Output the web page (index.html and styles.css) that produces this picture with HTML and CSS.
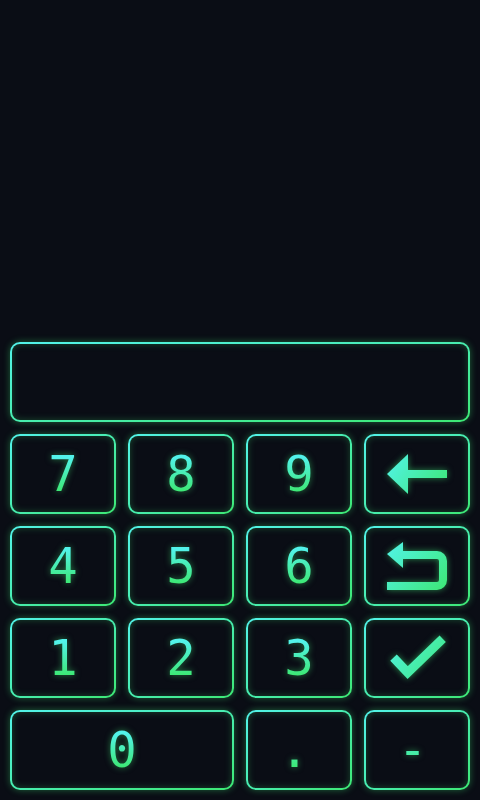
FILE: index.html
```html
<!DOCTYPE html>
<html>
<head>
<meta charset="utf-8">
<link rel="stylesheet" href="styles.css">
</head>
<body>
<div class="app">
  <div class="display"></div>
  <div class="pad">
    <div class="key"><span class="num">7</span></div>
    <div class="key"><span class="num">8</span></div>
    <div class="key"><span class="num">9</span></div>
    <div class="key">
      <svg class="icon" width="60" height="40" viewBox="0 0 60 40">
        <defs><linearGradient id="g1" x1="0" y1="0" x2="60" y2="40" gradientUnits="userSpaceOnUse"><stop offset="0" stop-color="#52f3ea"/><stop offset="1" stop-color="#3de874"/></linearGradient></defs>
        <polygon points="0,20 21,0 21,40" fill="url(#g1)"/>
        <rect x="20" y="16" width="40" height="8" fill="url(#g1)"/>
      </svg>
    </div>
    <div class="key"><span class="num">4</span></div>
    <div class="key"><span class="num">5</span></div>
    <div class="key"><span class="num">6</span></div>
    <div class="key">
      <svg class="icon" width="60" height="50" viewBox="0 0 60 50">
        <defs><linearGradient id="g2" x1="0" y1="0" x2="60" y2="50" gradientUnits="userSpaceOnUse"><stop offset="0" stop-color="#52f3ea"/><stop offset="1" stop-color="#3de874"/></linearGradient></defs>
        <polygon points="0,13 16,1 16,27" fill="url(#g2)"/>
        <path d="M15 14 H50 A6 6 0 0 1 56 20 V39 A6 6 0 0 1 50 45 H0" fill="none" stroke="url(#g2)" stroke-width="8"/>
      </svg>
    </div>
    <div class="key"><span class="num">1</span></div>
    <div class="key"><span class="num">2</span></div>
    <div class="key"><span class="num">3</span></div>
    <div class="key">
      <svg class="icon" width="60" height="48" viewBox="0 0 60 48">
        <defs><linearGradient id="g3" x1="0" y1="0" x2="60" y2="48" gradientUnits="userSpaceOnUse"><stop offset="0" stop-color="#52f3ea"/><stop offset="1" stop-color="#3de874"/></linearGradient></defs>
        <polyline points="6.5,23.7 20.7,38.6 55.7,4.8" fill="none" stroke="url(#g3)" stroke-width="9" stroke-linejoin="miter" stroke-linecap="butt"/>
      </svg>
    </div>
    <div class="key wide"><span class="num">0</span></div>
    <div class="key"><span class="num shift">.</span></div>
    <div class="key"><span class="num shift">-</span></div>
  </div>
</div>
</body>
</html>
```
FILE: styles.css
```css
html, body {
  margin: 0;
  padding: 0;
  background: #0a0d15;
}
.app {
  box-sizing: border-box;
  width: 480px;
  height: 800px;
  padding: 10px;
  display: flex;
  flex-direction: column;
  justify-content: flex-end;
  gap: 12px;
}
.display, .key {
  box-sizing: border-box;
  border: 2px solid transparent;
  border-radius: 10px;
  background:
    linear-gradient(#0a0d15, #0a0d15) padding-box,
    linear-gradient(to bottom right, #52f3ea, #3de874) border-box;
  box-shadow: 0 0 7px rgba(61, 232, 116, 0.4), inset 0 0 7px rgba(61, 232, 116, 0.28);
}
.display {
  height: 80px;
}
.pad {
  display: grid;
  grid-template-columns: repeat(4, 106px);
  grid-auto-rows: 80px;
  gap: 12px;
}
.key {
  display: flex;
  align-items: center;
  justify-content: center;
}
.wide {
  grid-column: span 2;
}
.num {
  font-family: "DejaVu Sans Mono", monospace;
  font-size: 49px;
  line-height: 1;
  background: linear-gradient(to bottom, #52f3ea 15%, #3de874 85%);
  -webkit-background-clip: text;
  background-clip: text;
  color: transparent;
  filter: drop-shadow(0 0 3px rgba(61, 232, 116, 0.5));
}
.shift {
  margin-right: 9px;
}
.icon {
  display: block;
  filter: drop-shadow(0 0 3px rgba(61, 232, 116, 0.55));
}
```
